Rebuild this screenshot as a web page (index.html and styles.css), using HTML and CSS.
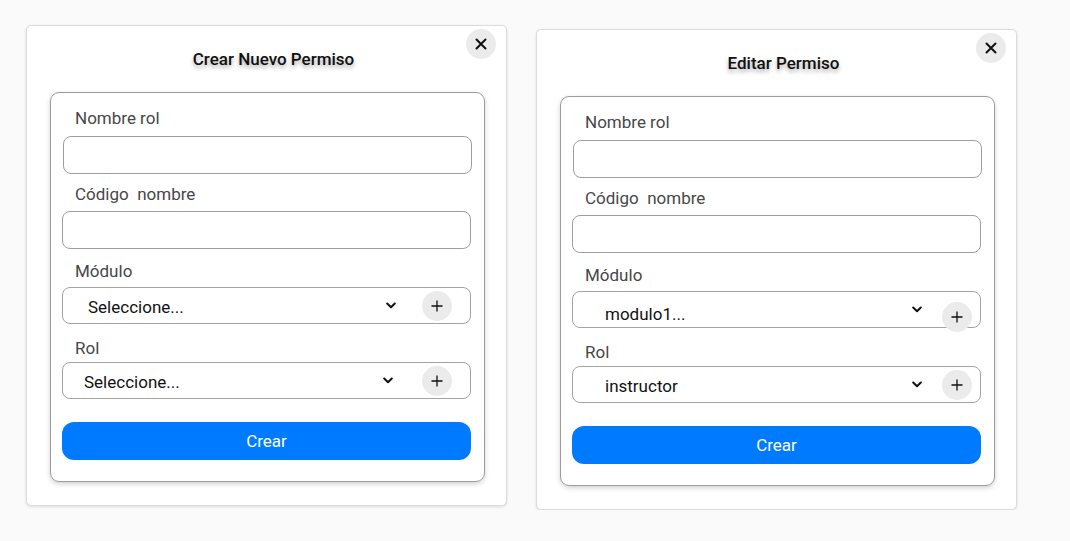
FILE: index.html
```html
<!DOCTYPE html>
<html lang="es">
<head>
<meta charset="utf-8">
<title>Permisos</title>
<link rel="stylesheet" href="styles.css">
</head>
<body>
<main class="stage">
  <section class="modal">
    <button class="close" aria-label="Cerrar">
      <svg width="12" height="12" viewBox="0 0 12 12"><path d="M1.5 1.5 L10.5 10.5 M10.5 1.5 L1.5 10.5" stroke="#111" stroke-width="2" stroke-linecap="round" fill="none"/></svg>
    </button>
    <h2 class="title">Crear Nuevo Permiso</h2>
    <div class="card">
      <div class="group g-name">
        <label class="label">Nombre rol</label>
        <div class="input first"></div>
      </div>
      <div class="group g-code">
        <label class="label">Código&nbsp; nombre</label>
        <div class="input"></div>
      </div>
      <div class="group g-mod">
        <label class="label">Módulo</label>
        <div class="select create-mod">
          <span class="value">Seleccione...</span>
          <svg class="chev" width="10" height="7" viewBox="0 0 10 7"><path d="M1.2 1.5 L5 5.2 L8.8 1.5" stroke="#111" stroke-width="2" fill="none" stroke-linecap="round" stroke-linejoin="round"/></svg>
          <span class="plus"><svg width="12" height="12" viewBox="0 0 12 12"><path d="M6 0.5 V11.5 M0.5 6 H11.5" stroke="#111" stroke-width="1.3" fill="none"/></svg></span>
        </div>
      </div>
      <div class="group g-rol">
        <label class="label">Rol</label>
        <div class="select create-rol">
          <span class="value">Seleccione...</span>
          <svg class="chev" width="10" height="7" viewBox="0 0 10 7"><path d="M1.2 1.5 L5 5.2 L8.8 1.5" stroke="#111" stroke-width="2" fill="none" stroke-linecap="round" stroke-linejoin="round"/></svg>
          <span class="plus"><svg width="12" height="12" viewBox="0 0 12 12"><path d="M6 0.5 V11.5 M0.5 6 H11.5" stroke="#111" stroke-width="1.3" fill="none"/></svg></span>
        </div>
      </div>
      <button class="submit">Crear</button>
    </div>
  </section>

  <section class="modal edit">
    <button class="close" aria-label="Cerrar">
      <svg width="12" height="12" viewBox="0 0 12 12"><path d="M1.5 1.5 L10.5 10.5 M10.5 1.5 L1.5 10.5" stroke="#111" stroke-width="2" stroke-linecap="round" fill="none"/></svg>
    </button>
    <h2 class="title">Editar Permiso</h2>
    <div class="card">
      <div class="group g-name">
        <label class="label">Nombre rol</label>
        <div class="input first"></div>
      </div>
      <div class="group g-code">
        <label class="label">Código&nbsp; nombre</label>
        <div class="input"></div>
      </div>
      <div class="group g-mod">
        <label class="label">Módulo</label>
        <div class="select edit-sel edit-mod">
          <span class="value">modulo1...</span>
          <svg class="chev" width="10" height="7" viewBox="0 0 10 7"><path d="M1.2 1.5 L5 5.2 L8.8 1.5" stroke="#111" stroke-width="2" fill="none" stroke-linecap="round" stroke-linejoin="round"/></svg>
          <span class="plus"><svg width="12" height="12" viewBox="0 0 12 12"><path d="M6 0.5 V11.5 M0.5 6 H11.5" stroke="#111" stroke-width="1.3" fill="none"/></svg></span>
        </div>
      </div>
      <div class="group g-rol">
        <label class="label">Rol</label>
        <div class="select edit-sel">
          <span class="value">instructor</span>
          <svg class="chev" width="10" height="7" viewBox="0 0 10 7"><path d="M1.2 1.5 L5 5.2 L8.8 1.5" stroke="#111" stroke-width="2" fill="none" stroke-linecap="round" stroke-linejoin="round"/></svg>
          <span class="plus"><svg width="12" height="12" viewBox="0 0 12 12"><path d="M6 0.5 V11.5 M0.5 6 H11.5" stroke="#111" stroke-width="1.3" fill="none"/></svg></span>
        </div>
      </div>
      <button class="submit">Crear</button>
    </div>
  </section>
</main>
</body>
</html>
```

FILE: styles.css
```css
* { box-sizing: border-box; }

html, body {
  margin: 0;
  padding: 0;
  background: #fafafa;
  font-family: Roboto, "Liberation Sans", Arial, sans-serif;
  color: #111;
}

.stage {
  display: flex;
  align-items: flex-start;
  gap: 29px;
  padding: 25px 0 0 26px;
}

.modal {
  position: relative;
  width: 481px;
  height: 481px;
  background: #fff;
  border: 1px solid #dcdcdc;
  border-radius: 5px;
  box-shadow: 0 1px 3px rgba(0, 0, 0, 0.12);
  padding: 23px 22px 0 23px;
}

.modal.edit { margin-top: 4px; }

.close {
  position: absolute;
  top: 3px;
  right: 10px;
  width: 30px;
  height: 30px;
  border: none;
  border-radius: 50%;
  background: #ebebeb;
  padding: 0;
  display: flex;
  align-items: center;
  justify-content: center;
}

.title {
  margin: 0 0 23px;
  padding-left: 13px;
  text-align: center;
  font-size: 17px;
  line-height: 20px;
  font-weight: 500;
  color: #111;
  text-shadow: 0 3px 4px rgba(0, 0, 0, 0.32);
}

.card {
  width: 435px;
  height: 390px;
  border: 1px solid #9c9c9c;
  border-radius: 9px;
  box-shadow: 0 2px 5px rgba(0, 0, 0, 0.18);
  padding: 15px 13px 0 11px;
  display: flex;
  flex-direction: column;
}

.label {
  display: block;
  padding-left: 13px;
  font-size: 17px;
  line-height: 20px;
  color: #474747;
}

.g-name .label { margin-bottom: 8px; }
.g-code { margin-top: 10px; }
.g-code .label { margin-bottom: 7px; }
.g-mod { margin-top: 12px; }
.g-mod .label { margin-bottom: 6px; }
.g-rol { margin-top: 14px; }
.g-rol .label { margin-bottom: 4px; }

.input {
  height: 38px;
  border: 1px solid #9e9e9e;
  border-radius: 8px;
  background: #fff;
}

.input.first { margin-left: 1px; margin-right: -1px; }

.select {
  height: 37px;
  border: 1px solid #a3a3a3;
  border-radius: 8px;
  background: #fff;
  display: flex;
  align-items: center;
  padding: 0 18px 0 25px;
}

.select .value {
  flex: 1;
  font-size: 17px;
  color: #111;
  padding-top: 2px;
}

.create-rol { padding-left: 21px; }
.create-rol .chev { margin-right: 29px; }

.chev { margin-right: 26px; flex: none; }

.plus {
  width: 30px;
  height: 30px;
  border-radius: 50%;
  background: #ebebeb;
  display: flex;
  align-items: center;
  justify-content: center;
  flex: none;
}

.edit-sel { padding: 0 8px 0 32px; }
.edit-sel .chev { margin-right: 20px; }
.edit-mod .plus { margin-top: 15px; }
.edit-mod .value { padding-top: 9px; }
.edit-mod .chev { margin-top: 7px; margin-bottom: 7px; }

.submit {
  margin-top: 23px;
  height: 38px;
  border: none;
  border-radius: 12px;
  background: #007bff;
  color: #fff;
  font-family: Roboto, "Liberation Sans", Arial, sans-serif;
  font-size: 17px;
}
```
